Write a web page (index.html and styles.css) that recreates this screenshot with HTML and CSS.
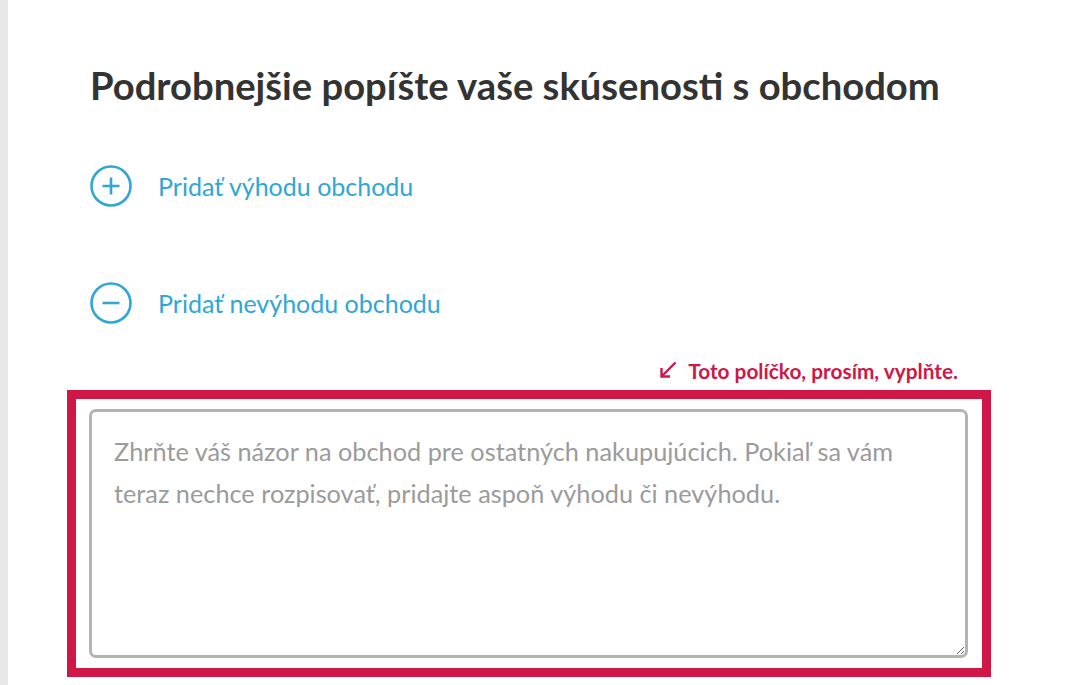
FILE: index.html
```html
<!DOCTYPE html>
<html lang="sk">
<head>
    <meta charset="UTF-8">
    <meta name="viewport" content="width=device-width, initial-scale=1.0">
    <title>Recenzia obchodu</title>
    <link rel="stylesheet" href="styles.css">
</head>
<body>
    <div class="review-page">
        <h1 class="review-title">Podrobnejšie popíšte vaše skúsenosti s obchodom</h1>

        <a href="#" class="review-action">
            <svg class="action-icon" viewBox="0 0 42 42" width="42" height="42">
                <circle cx="21" cy="21" r="19.5" fill="none" stroke="currentColor" stroke-width="2.6"/>
                <path d="M21 12.5v17M12.5 21h17" stroke="currentColor" stroke-width="2.6" fill="none"/>
            </svg>
            <span>Pridať výhodu obchodu</span>
        </a>

        <a href="#" class="review-action">
            <svg class="action-icon" viewBox="0 0 42 42" width="42" height="42">
                <circle cx="21" cy="21" r="19.5" fill="none" stroke="currentColor" stroke-width="2.6"/>
                <path d="M12.5 21h17" stroke="currentColor" stroke-width="2.6" fill="none"/>
            </svg>
            <span>Pridať nevýhodu obchodu</span>
        </a>

        <div class="error-row">
            <svg class="error-arrow" viewBox="0 0 18 18" width="18" height="18">
                <path d="M16.5 1.5L2.5 15.5M2.5 7v8.5H11" stroke="currentColor" stroke-width="2.4" fill="none"/>
            </svg>
            <span class="error-text">Toto políčko, prosím, vyplňte.</span>
        </div>

        <div class="field-wrap is-invalid">
            <textarea class="summary" placeholder="Zhrňte váš názor na obchod pre ostatných nakupujúcich. Pokiaľ sa vám teraz nechce rozpisovať, pridajte aspoň výhodu či nevýhodu."></textarea>
        </div>
    </div>
</body>
</html>
```

FILE: styles.css
```css
html, body {
    margin: 0;
    background-color: white;
}
body {
    font-family: Lato, "Open Sans", sans-serif;
    color: #333;
    overflow: hidden;
}
.review-page {
    border-left: 8px solid #e8e8e8;
    min-height: 100vh;
    padding: 58px 0 0 82px;
    box-sizing: border-box;
}
.review-title {
    font-size: 38.2px;
    font-weight: 700;
    line-height: 54px;
    margin: 0 0 53px;
    color: #333;
}
.review-action {
    display: flex;
    align-items: center;
    gap: 26px;
    height: 42px;
    margin-bottom: 75px;
    color: #2fa7d6;
    text-decoration: none;
    font-size: 25px;
}
.action-icon {
    flex: none;
    display: block;
}
.error-row {
    display: flex;
    justify-content: flex-end;
    align-items: center;
    gap: 11px;
    width: 868px;
    margin-top: -42px;
    height: 26px;
    color: #cf1748;
    font-size: 20.8px;
    font-weight: 700;
}
.error-arrow {
    flex: none;
    display: block;
}
.field-wrap {
    margin: 7px 0 0 -23px;
    width: 924px;
    box-sizing: border-box;
    padding: 10px 15px 10px 13px;
}
.field-wrap.is-invalid {
    border: 9px solid #cf1748;
}
.summary {
    display: block;
    width: 879px;
    height: 249px;
    box-sizing: border-box;
    border: 3px solid #b3b3b3;
    border-radius: 7px;
    padding: 18px 22px;
    font-family: Lato, "Open Sans", sans-serif;
    font-size: 25.3px;
    line-height: 42px;
    color: #333;
    resize: vertical;
    outline: none;
}
.summary::placeholder {
    color: #9b9b9b;
}
```
